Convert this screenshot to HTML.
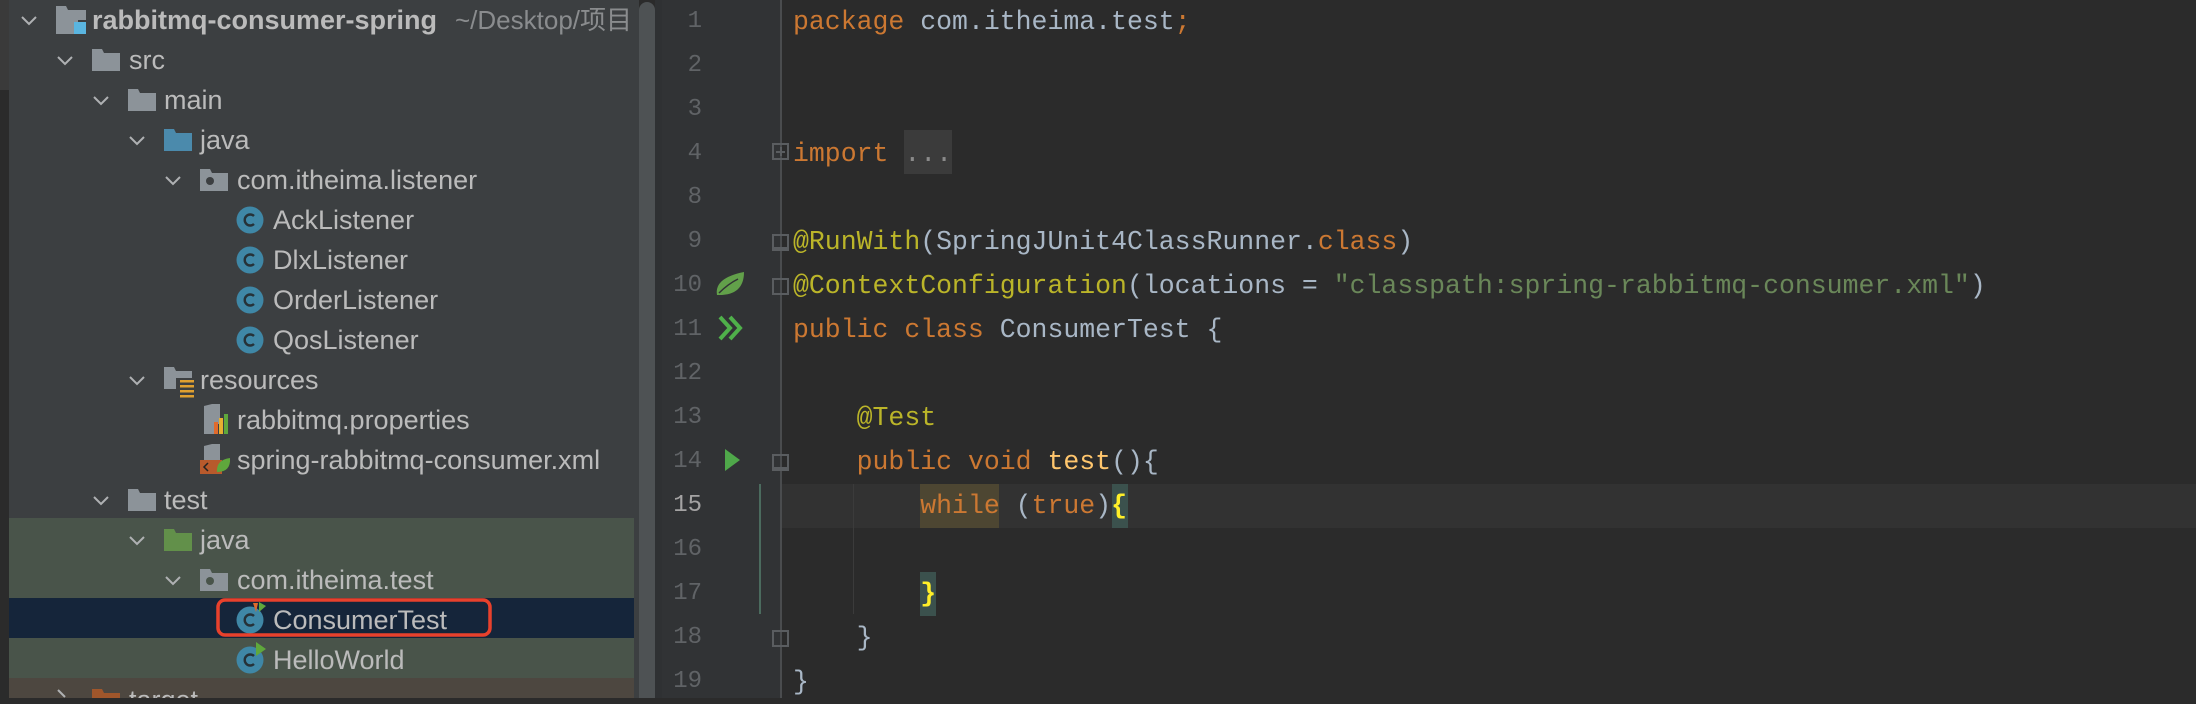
<!DOCTYPE html>
<html><head><meta charset="utf-8"><style>
*{margin:0;padding:0;box-sizing:border-box}
body{width:2196px;height:698px;overflow:hidden;background:#2b2b2b;position:relative;font-family:"Liberation Sans","Noto Sans CJK SC",sans-serif}
.abs{position:absolute}
#tree{left:9px;top:0;width:625px;height:698px;background:#3c3f41;overflow:hidden}
.row{position:absolute;left:0;width:625px;height:40px}
.t{position:absolute;top:0;line-height:40px;font-size:27px;color:#bbbbbb;white-space:nowrap}
.chev{position:absolute;top:13px}
.ic{position:absolute}
#gutter{left:662px;top:0;width:118px;height:698px;background:#313335}
.ln{position:absolute;left:662px;width:40px;text-align:right;font-family:"Liberation Mono",monospace;font-size:24px;color:#606366;line-height:44px;height:44px}
.cl{position:absolute;left:793px;height:44px;line-height:44px;font-family:"Liberation Mono",monospace;font-size:26.5px;color:#a9b7c6;white-space:pre}
.k{color:#cc7832}.a{color:#bbb529}.s{color:#6a8759}.m{color:#ffc66d}.y{color:#ffef28;font-weight:bold}
.fold{position:absolute;left:772px;width:17px;height:17px;border:2px solid #5a5d60}
</style></head><body>
<div class="abs" style="left:0;top:0;width:9px;height:698px;background:#2b2b2b"></div>
<div class="abs" style="left:0;top:0;width:9px;height:90px;background:#3a3a3a"></div>
<div id="tree" class="abs">
<div class="abs" style="left:0;top:518px;width:625px;height:80px;background:#49544a"></div>
<div class="abs" style="left:0;top:598px;width:625px;height:40px;background:#15253a"></div>
<div class="abs" style="left:0;top:638px;width:625px;height:40px;background:#49544a"></div>
<div class="abs" style="left:0;top:678px;width:625px;height:20px;background:#4d4740"></div>
</div>
<div class="abs" style="left:634px;top:0;width:5px;height:698px;background:#3c3f41"></div>
<div class="abs" style="left:639px;top:2px;width:16px;height:696px;background:#4e5254;border-radius:8px 8px 0 0"></div>
<div class="abs" style="left:655px;top:0;width:7px;height:698px;background:#2f3133"></div>

<svg class="abs" style="left:0;top:0" width="662" height="698">
<defs>
<g id="chv"><path d="M0 0 L7 7 L14 0" fill="none" stroke="#afb1b3" stroke-width="2"/></g>
<g id="fld"><path d="M0 0 H10 L12 4 H28 V22 H0 Z"/></g>
<g id="cls"><circle cx="13" cy="14" r="13.5" fill="#3f87a6"/><path d="M17 10 A5.5 5.5 0 1 0 17 18" fill="none" stroke="#263238" stroke-width="2.4"/></g>
</defs>
<g transform="translate(22,17)"><use href="#chv"/></g>
<path d="M56 6 H66 L68 10 H86 V20 H78 V34 H56 Z" fill="#8c9399"/><rect x="74" y="22" width="12" height="12" fill="#5ab5e0"/>
<text x="92" y="29" font-family="Liberation Sans" font-size="27" font-weight="bold" fill="#bbbbbb">rabbitmq-consumer-spring</text>
<text x="455" y="29" font-family="Liberation Sans,Noto Sans CJK SC" font-size="26" fill="#8a8c8e">~/Desktop/项目</text>
<g transform="translate(58,57)"><use href="#chv"/></g><g fill="#8c9399" transform="translate(92,49)"><use href="#fld"/></g>
<text x="129" y="69" font-family="Liberation Sans" font-size="27" fill="#bbbbbb">src</text>
<g transform="translate(94,97)"><use href="#chv"/></g><g fill="#8c9399" transform="translate(128,89)"><use href="#fld"/></g>
<text x="164" y="109" font-family="Liberation Sans" font-size="27" fill="#bbbbbb">main</text>
<g transform="translate(130,137)"><use href="#chv"/></g><g fill="#4b8aac" transform="translate(164,129)"><use href="#fld"/></g>
<text x="200" y="149" font-family="Liberation Sans" font-size="27" fill="#bbbbbb">java</text>
<g transform="translate(166,177)"><use href="#chv"/></g><g fill="#8c9399" transform="translate(200,169)"><use href="#fld"/></g><circle cx="210" cy="181" r="4" fill="#3c3f41"/>
<text x="237" y="189" font-family="Liberation Sans" font-size="27" fill="#bbbbbb">com.itheima.listener</text>
<g transform="translate(237,206)"><use href="#cls"/></g><text x="273" y="229" font-family="Liberation Sans" font-size="27" fill="#bbbbbb">AckListener</text>
<g transform="translate(237,246)"><use href="#cls"/></g><text x="273" y="269" font-family="Liberation Sans" font-size="27" fill="#bbbbbb">DlxListener</text>
<g transform="translate(237,286)"><use href="#cls"/></g><text x="273" y="309" font-family="Liberation Sans" font-size="27" fill="#bbbbbb">OrderListener</text>
<g transform="translate(237,326)"><use href="#cls"/></g><text x="273" y="349" font-family="Liberation Sans" font-size="27" fill="#bbbbbb">QosListener</text>
<g transform="translate(130,377)"><use href="#chv"/></g><g fill="#8c9399" transform="translate(164,367)"><use href="#fld"/></g>
<rect x="176" y="378" width="18" height="16" fill="#3c3f41"/><g fill="#e0a030"><rect x="180" y="380" width="14" height="2.5"/><rect x="180" y="385" width="14" height="2.5"/><rect x="180" y="390" width="14" height="2.5"/><rect x="180" y="395" width="14" height="2.5"/></g>
<text x="200" y="389" font-family="Liberation Sans" font-size="27" fill="#bbbbbb">resources</text>
<path d="M204 406 L212 404 H220 V424 H214 V434 H204 Z" fill="#8c9399"/><rect x="214" y="422" width="4" height="12" fill="#e06a2c"/><rect x="219" y="418" width="4" height="16" fill="#e7b030"/><rect x="224" y="414" width="4" height="20" fill="#5fa83c"/>
<text x="237" y="429" font-family="Liberation Sans" font-size="27" fill="#bbbbbb">rabbitmq.properties</text>
<path d="M204 446 L212 444 H220 V462 H204 Z" fill="#8c9399"/><rect x="200" y="460" width="22" height="14" fill="#b85a2c"/><path d="M217 472 Q216 460 230 458 Q231 472 217 472Z" fill="#5fa83c"/><path d="M208 463 L204 467 L208 471" fill="none" stroke="#222" stroke-width="1.5"/>
<text x="237" y="469" font-family="Liberation Sans" font-size="27" fill="#bbbbbb">spring-rabbitmq-consumer.xml</text>
<g transform="translate(94,497)"><use href="#chv"/></g><g fill="#8c9399" transform="translate(128,489)"><use href="#fld"/></g>
<text x="164" y="509" font-family="Liberation Sans" font-size="27" fill="#bbbbbb">test</text>
<g transform="translate(130,537)"><use href="#chv"/></g><g fill="#62904a" transform="translate(164,529)"><use href="#fld"/></g>
<text x="200" y="549" font-family="Liberation Sans" font-size="27" fill="#bbbbbb">java</text>
<g transform="translate(166,577)"><use href="#chv"/></g><g fill="#8c9399" transform="translate(200,569)"><use href="#fld"/></g><circle cx="210" cy="581" r="4" fill="#49544a"/>
<text x="237" y="589" font-family="Liberation Sans" font-size="27" fill="#bbbbbb">com.itheima.test</text>
<g transform="translate(237,606)"><use href="#cls"/></g><path d="M253 603 L258 603 L256 612Z" fill="#e06a2c"/><path d="M259 602 L266 606 L259 612Z" fill="#5fa83c"/>
<text x="273" y="629" font-family="Liberation Sans" font-size="27" fill="#bbbbbb">ConsumerTest</text>
<rect x="218" y="600" width="272" height="35" rx="7" fill="none" stroke="#e8412c" stroke-width="3.5"/>
<g transform="translate(237,646)"><use href="#cls"/></g><path d="M256 642 L266 649 L256 656Z" fill="#5fa83c"/>
<text x="273" y="669" font-family="Liberation Sans" font-size="27" fill="#bbbbbb">HelloWorld</text>
<path d="M58 690 L65 697" stroke="#afb1b3" stroke-width="2"/><g fill="#a0562b" transform="translate(92,689)"><use href="#fld"/></g>
<text x="129" y="709" font-family="Liberation Sans" font-size="27" fill="#bbbbbb">target</text>
</svg>

<div id="gutter" class="abs"></div>
<div class="abs" style="left:780px;top:0;width:2px;height:698px;background:#4a4c4e"></div>
<!-- current line -->
<div class="abs" style="left:782px;top:484px;width:1414px;height:44px;background:#323232"></div>
<div class="abs" style="left:662px;top:484px;width:118px;height:44px;background:#313335"></div>
<div class="abs" style="left:759px;top:484px;width:2px;height:130px;background:#4b6b5e"></div>
<div class="abs" style="left:853px;top:484px;width:1px;height:130px;background:#3b3b3b"></div>
<div class="abs" style="left:904px;top:130px;width:48px;height:44px;background:#3b3b3b"></div>
<div class="abs" style="left:920px;top:484px;width:79px;height:44px;background:#4d4632"></div>
<div class="abs" style="left:1112px;top:484px;width:16px;height:44px;background:#3b514d"></div>
<div class="abs" style="left:920px;top:572px;width:16px;height:44px;background:#3b514d"></div>

<div class="ln" style="top:0">1</div>
<div class="ln" style="top:44px">2</div>
<div class="ln" style="top:88px">3</div>
<div class="ln" style="top:132px">4</div>
<div class="ln" style="top:176px">8</div>
<div class="ln" style="top:220px">9</div>
<div class="ln" style="top:264px">10</div>
<div class="ln" style="top:308px">11</div>
<div class="ln" style="top:352px">12</div>
<div class="ln" style="top:396px">13</div>
<div class="ln" style="top:440px">14</div>
<div class="ln" style="top:484px;color:#a4a3a3">15</div>
<div class="ln" style="top:528px">16</div>
<div class="ln" style="top:572px">17</div>
<div class="ln" style="top:616px">18</div>
<div class="ln" style="top:660px">19</div>

<svg class="abs" style="left:700px;top:0" width="100" height="698">
<path d="M17 295 Q14 278 44 272 Q44 296 17 295Z" fill="#62a04a"/><path d="M19 293 Q28 284 38 279" stroke="#313335" stroke-width="1.5" fill="none"/>
<path d="M20 317 L30 328 L20 339 M30 317 L40 328 L30 339" fill="none" stroke="#4fb04a" stroke-width="4"/>
<path d="M25 449 L40 460 L25 471Z" fill="#4fa84a"/>
</svg>
<!-- fold markers -->
<div class="fold" style="top:143px"></div>
<div class="abs" style="left:776px;top:151px;width:9px;height:2px;background:#5a5d60"></div>
<div class="abs" style="left:780px;top:147px;width:2px;height:9px;background:#5a5d60"></div>
<div class="fold" style="top:234px;border-bottom-width:4px"></div>
<div class="fold" style="top:278px"></div>
<div class="fold" style="top:454px;border-bottom-width:4px"></div>
<div class="fold" style="top:630px"></div>

<div class="cl" style="top:0"><span class="k">package</span> com.itheima.test<span class="k">;</span></div>
<div class="cl" style="top:132px"><span class="k">import</span> <span style="color:#8a8a8a">...</span></div>
<div class="cl" style="top:220px"><span class="a">@RunWith</span>(SpringJUnit4ClassRunner.<span class="k">class</span>)</div>
<div class="cl" style="top:264px"><span class="a">@ContextConfiguration</span>(locations = <span class="s">"classpath:spring-rabbitmq-consumer.xml"</span>)</div>
<div class="cl" style="top:308px"><span class="k">public class</span> ConsumerTest {</div>
<div class="cl" style="top:396px">    <span class="a">@Test</span></div>
<div class="cl" style="top:440px">    <span class="k">public void</span> <span class="m">test</span>(){</div>
<div class="cl" style="top:484px">        <span class="k">while</span> (<span class="k">true</span>)<span class="y">{</span></div>
<div class="cl" style="top:572px">        <span class="y">}</span></div>
<div class="cl" style="top:616px">    }</div>
<div class="cl" style="top:660px">}</div>
</body></html>
